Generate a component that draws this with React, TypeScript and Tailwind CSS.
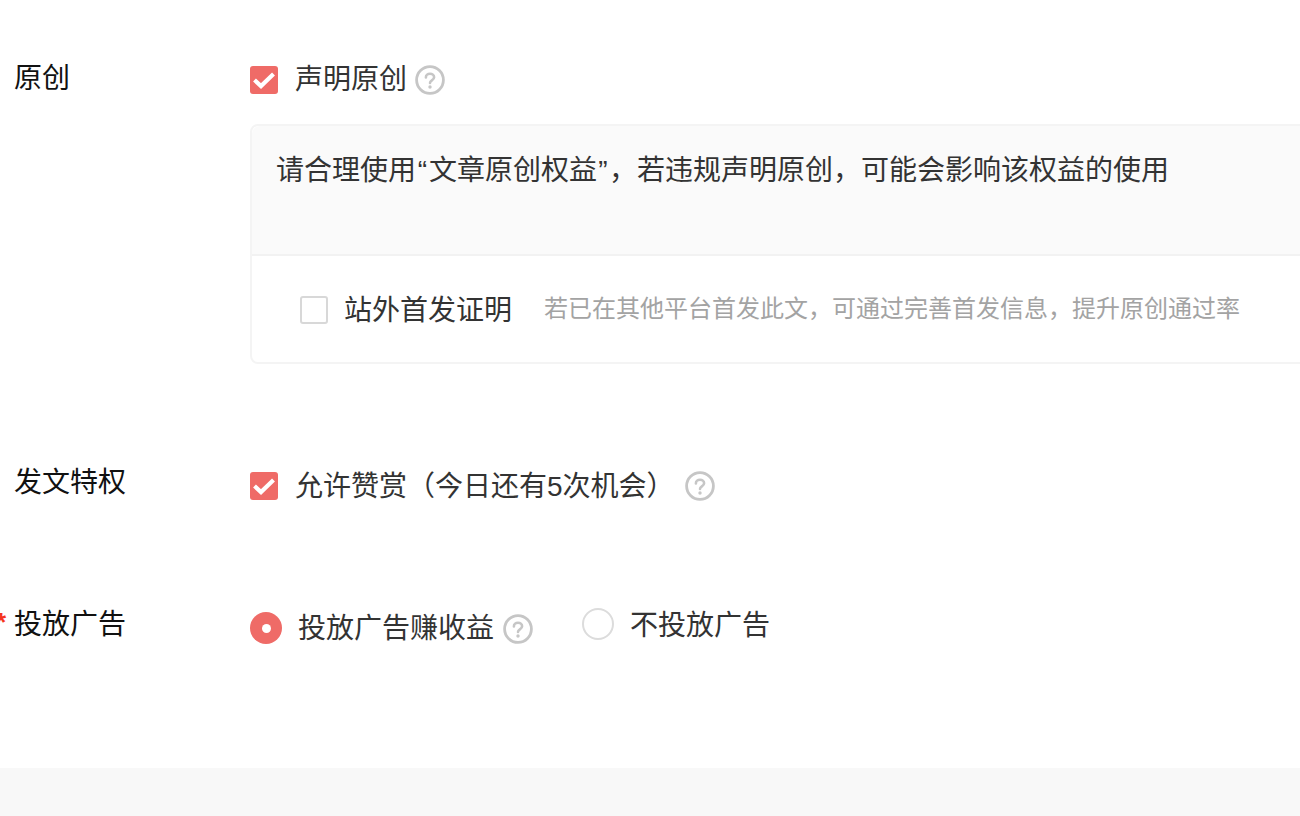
const FONT = "font-['Liberation_Sans','Noto_Sans_CJK_SC',sans-serif]";

function Help() {
  return (
    <svg width="30" height="30" viewBox="0 0 30 30" fill="none" className="shrink-0">
      <circle cx="15" cy="15" r="13.4" stroke="#c6c6c6" strokeWidth="2.8" />
      <path
        d="M10.9 12.4c0-2.2 1.8-3.6 4.1-3.6s4.1 1.4 4.1 3.4c0 1.6-1 2.3-2.2 3.1-1.2.8-1.9 1.3-1.9 2.7"
        stroke="#c6c6c6"
        strokeWidth="2.6"
        strokeLinecap="round"
      />
      <circle cx="15" cy="22" r="1.7" fill="#c6c6c6" />
    </svg>
  );
}

function Checked() {
  return (
    <span className="flex h-[28px] w-[28px] shrink-0 items-center justify-center rounded-[3px] bg-[#ef6b67]">
      <svg width="28" height="28" viewBox="0 0 28 28" fill="none">
        <path d="M4.5 14l6.5 6L23.5 8" stroke="#fff" strokeWidth="4.2" />
      </svg>
    </span>
  );
}

export default function App() {
  return (
    <div className={`${FONT} flex h-[816px] w-[1300px] flex-col overflow-hidden bg-white`}>
      <div className="h-[768px] shrink-0 pt-[59px]">
        {/* 原创 */}
        <div className="flex">
          <div className="w-[250px] shrink-0 pl-[14px] text-[28px] leading-[40px] text-[#111]">原创</div>
          <div className="min-w-0 flex-1">
            <div className="flex h-[42px] items-center text-[28px] text-[#333]">
              <Checked />
              <span className="ml-[17px]">声明原创</span>
              <span className="ml-[8px]"><Help /></span>
            </div>
            <div className="mt-[23px] h-[240px] w-[1200px] rounded-[8px] border-2 border-[#f4f4f4]">
              <div className="h-[130px] rounded-t-[8px] border-b-2 border-[#f2f2f2] bg-[#fafafa] pl-[24px] pt-[25px] text-[28px] leading-[40px] text-[#333]">
                请合理使用<span className="inline-block w-[13px] text-center">“</span>文章原创权益<span className="inline-block w-[12px] text-center">”</span>，若违规声明原创，可能会影响该权益的使用
              </div>
              <div className="mt-[33px] flex h-[40px] items-center pl-[48px]">
                <span className="mt-[2px] h-[28px] w-[28px] shrink-0 rounded-[3px] border-2 border-[#d8d8d8]" />
                <span className="ml-[16px] mt-[4px] text-[28px] leading-[40px] text-[#333]">站外首发证明</span>
                <span className="ml-[32px] text-[24px] leading-[36px] text-[#a3a3a3]">
                  若已在其他平台首发此文，可通过完善首发信息，提升原创通过率
                </span>
              </div>
            </div>
          </div>
        </div>

        {/* 发文特权 */}
        <div className="mt-[99px] flex">
          <div className="w-[250px] shrink-0 pl-[14px] text-[28px] leading-[40px] text-[#111]">发文特权</div>
          <div className="mt-[3px] flex h-[40px] items-center text-[28px] text-[#333]">
            <Checked />
            <span className="ml-[17px] mt-[2px]">允许赞赏（今日还有5次机会）</span>
            <span className="ml-[10px]"><Help /></span>
          </div>
        </div>

        {/* 投放广告 */}
        <div className="mt-[99px] flex">
          <div className="relative w-[250px] shrink-0 pl-[14px] text-[28px] leading-[40px] text-[#111]">
            <span className="absolute -left-[4px] -top-[3px] text-[26px] font-bold text-[#f5351f]">*</span>
            投放广告
          </div>
          <div className="flex items-start text-[28px] text-[#333]">
            <div className="mt-[1px] flex h-[44px] items-center">
              <span className="flex h-[32px] w-[32px] shrink-0 items-center justify-center rounded-full bg-[#ef6b67]">
                <span className="h-[9px] w-[9px] rounded-full bg-white" />
              </span>
              <span className="ml-[16px] mt-[2px]">投放广告赚收益</span>
              <span className="ml-[9px] mt-[2px]"><Help /></span>
            </div>
            <div className="ml-[49px] -mt-[1px] flex h-[40px] items-center">
              <span className="h-[32px] w-[32px] shrink-0 rounded-full border-2 border-[#dcdcdc]" />
              <span className="ml-[16px] mt-[4px]">不投放广告</span>
            </div>
          </div>
        </div>
      </div>
      <div className="flex-1 bg-[#f8f8f8]" />
    </div>
  );
}
